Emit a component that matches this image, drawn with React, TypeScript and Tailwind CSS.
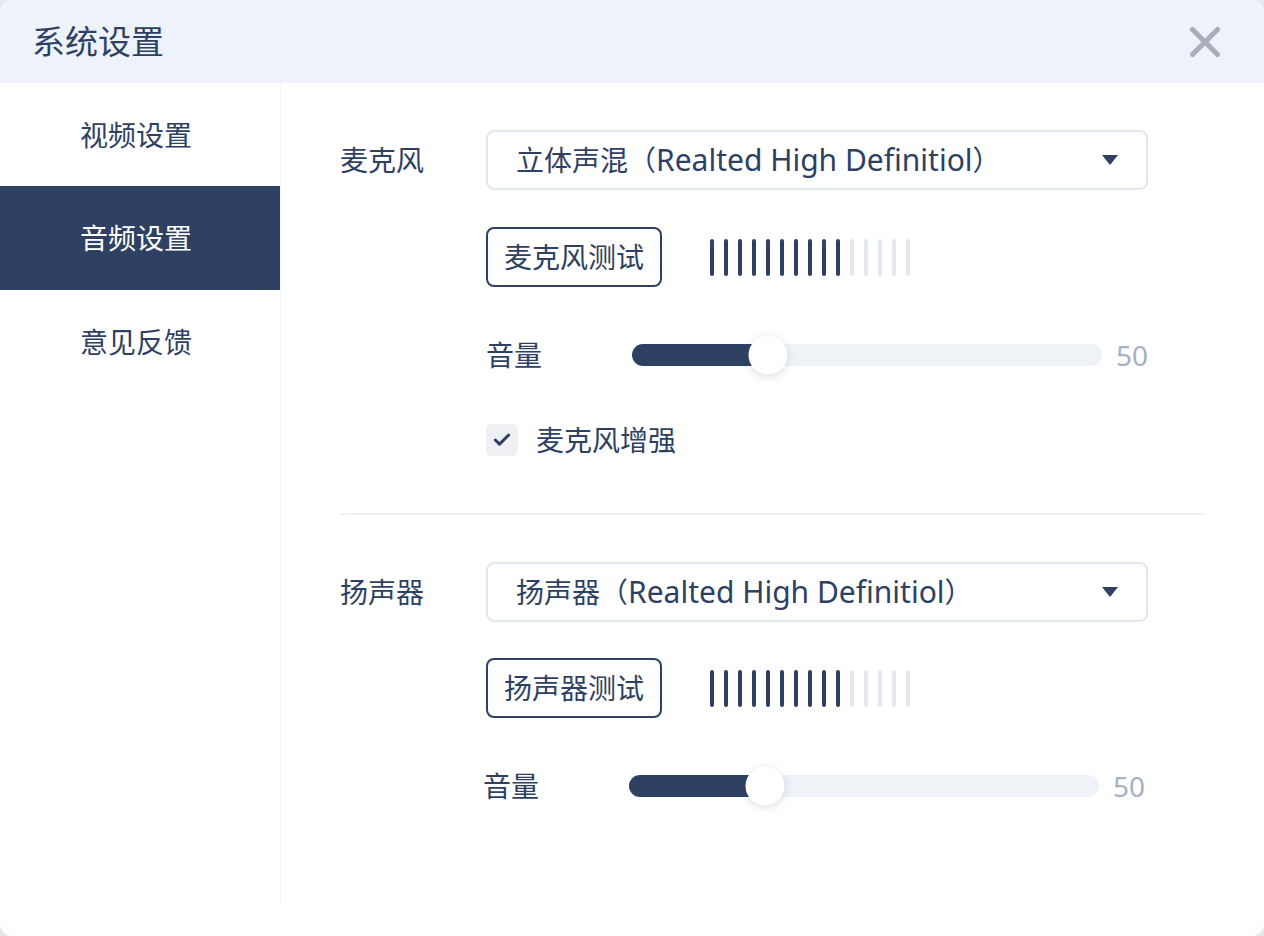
import { X, Check } from 'lucide-react';

const font = { fontFamily: '"Noto Sans", "Noto Sans CJK SC", sans-serif' };

function Select({ cn, en }: { cn: string; en: string }) {
  return (
    <div className="flex h-[60px] w-[662px] items-center justify-between rounded-[8px] border-2 border-[#e1e6ef] bg-white pl-[28px] pr-[28px]">
      <span className="text-[28px] leading-none text-[#2e4162]">
        {cn}（<span className="text-[30px]">{en}</span>）
      </span>
      <svg width="16" height="10" viewBox="0 0 16 10">
        <path d="M0 0 H16 L8 10 Z" fill="#2e4162" />
      </svg>
    </div>
  );
}

function Bars({ on, total }: { on: number; total: number }) {
  return (
    <div className="flex h-[37px] gap-[10px]">
      {Array.from({ length: total }).map((_, i) => (
        <div key={i} className={`h-full w-[4px] rounded-full ${i < on ? 'bg-[#2e4162]' : 'bg-[#e3e8f0]'}`} />
      ))}
    </div>
  );
}

function Volume({ value, pct }: { value: number; pct: number }) {
  return (
    <div className="flex h-[40px] items-center">
      <span className="w-[146px] text-[28px] leading-none text-[#2e4162]">音量</span>
      <div className="relative h-[22px] w-[470px] rounded-full bg-[#eff3f8]">
        <div className="h-full rounded-full bg-[#2e4162]" style={{ width: `${pct}%` }} />
        <div
          className="absolute top-1/2 h-[39px] w-[39px] -translate-x-1/2 -translate-y-1/2 rounded-full bg-white shadow-[0_2px_8px_rgba(46,65,98,0.18)]"
          style={{ left: `${pct}%` }}
        />
      </div>
      <span className="ml-[14px] text-[28px] leading-none text-[#a5b0c4]">{value}</span>
    </div>
  );
}

function TestButton({ label }: { label: string }) {
  return (
    <div className="flex h-[60px] w-[176px] items-center justify-center rounded-[8px] border-2 border-[#2e4162] text-[28px] leading-none text-[#2e4162]">
      {label}
    </div>
  );
}

export default function App() {
  const menu = ['视频设置', '音频设置', '意见反馈'];
  const active = 1;

  return (
    <div className="h-[936px] w-[1264px] bg-[#e6e6e6]" style={font}>
      <div className="flex h-full w-full flex-col overflow-hidden rounded-[12px] bg-white">
        {/* Header */}
        <div className="flex h-[83px] shrink-0 items-center justify-between bg-[#eef2fa] pl-[32px] pr-[34px]">
          <h1 className="text-[33px] leading-none text-[#2e4162]">系统设置</h1>
          <X size={50} strokeWidth={2.5} className="text-[#a8afba]" />
        </div>

        <div className="flex flex-1 pb-[32px]">
          {/* Sidebar */}
          <div className="w-[281px] shrink-0 border-r border-[#f2f3f5]">
            {menu.map((m, i) => (
              <div
                key={m}
                className={`flex items-center pl-[80px] text-[28px] leading-none ${
                  i === active ? 'bg-[#2e4162] text-white' : 'text-[#2e4162]'
                } ${i === 0 ? 'h-[103px]' : 'h-[104px]'}`}
              >
                {m}
              </div>
            ))}
          </div>

          {/* Content */}
          <div className="flex-1 pl-[59px] pr-[59px] pt-[47px]">
            {/* Microphone */}
            <div className="flex items-center">
              <span className="w-[146px] text-[28px] leading-none text-[#2e4162]">麦克风</span>
              <Select cn="立体声混" en="Realted High Definitiol" />
            </div>
            <div className="ml-[146px]">
              <div className="mt-[37px] flex items-center gap-[48px]">
                <TestButton label="麦克风测试" />
                <Bars on={10} total={15} />
              </div>
              <div className="mt-[48px]">
                <Volume value={50} pct={29} />
              </div>
              <div className="mt-[49px] flex items-center gap-[18px]">
                <div className="flex h-[32px] w-[32px] items-center justify-center rounded-[6px] bg-[#eef0f3]">
                  <Check size={20} strokeWidth={3.6} className="text-[#2e4162]" />
                </div>
                <span className="text-[28px] leading-none text-[#2e4162]">麦克风增强</span>
              </div>
            </div>

            <div className="mt-[57px] h-[2px] bg-[#eef2f7]" />

            {/* Speaker */}
            <div className="mt-[47px] flex items-center">
              <span className="w-[146px] text-[28px] leading-none text-[#2e4162]">扬声器</span>
              <Select cn="扬声器" en="Realted High Definitiol" />
            </div>
            <div className="ml-[146px]">
              <div className="mt-[36px] flex items-center gap-[48px]">
                <TestButton label="扬声器测试" />
                <Bars on={10} total={15} />
              </div>
              <div className="-ml-[3px] mt-[48px]">
                <Volume value={50} pct={29} />
              </div>
            </div>
          </div>
        </div>
      </div>
    </div>
  );
}
